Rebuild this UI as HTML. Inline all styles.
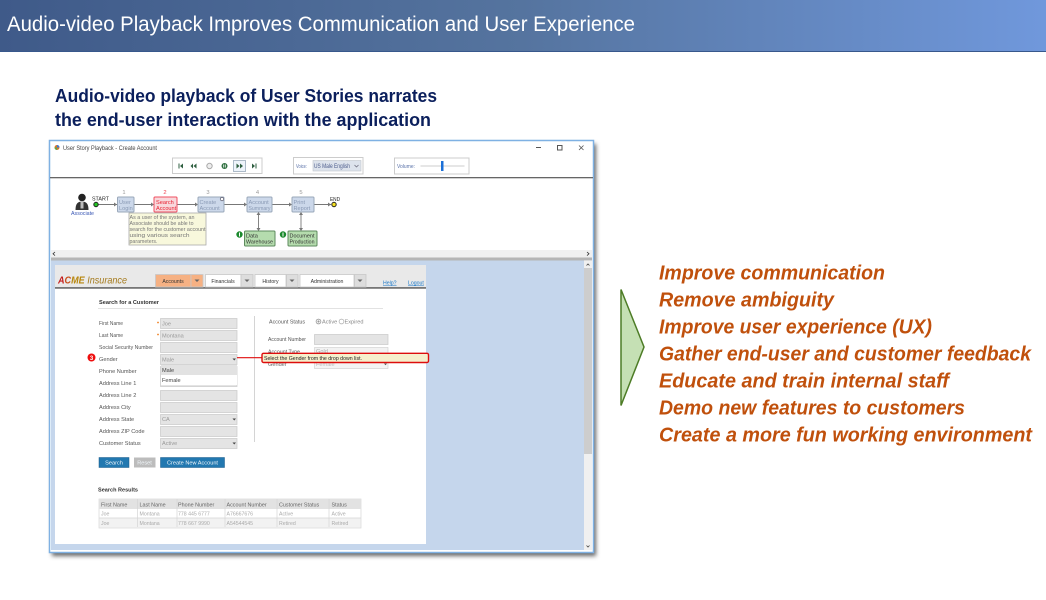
<!DOCTYPE html>
<html><head><meta charset="utf-8"><style>
html,body{margin:0;padding:0;background:#fff;width:1046px;height:600px;overflow:hidden}
svg{display:block;font-family:"Liberation Sans",sans-serif}
.t{font-size:5.6px;fill:#555}
.f{fill:#e4e4e4;stroke:#c8c8c8;stroke-width:.7}
.l{stroke:#777;stroke-width:.9;fill:none}
.b{fill:#ccd8ea;stroke:#9aa8ba;stroke-width:1}
.bt{font-size:5.6px;fill:#8a9ab5}
.g{fill:#b5dcae;stroke:#5d8a5d;stroke-width:1}
.gt{font-size:5.6px;fill:#333}
.c{font-size:5.2px;fill:#aaa}
.h{font-size:5.4px;fill:#666}
</style></head><body>
<svg width="1046" height="600" viewBox="0 0 1046 600" xmlns="http://www.w3.org/2000/svg">
<defs>
<linearGradient id="hd" x1="0" x2="1" y1="0" y2="0"><stop offset="0" stop-color="#3f5a89"/><stop offset=".5" stop-color="#55749f"/><stop offset="1" stop-color="#7098dc"/></linearGradient>
<filter id="sh" x="-5%" y="-5%" width="110%" height="110%"><feGaussianBlur stdDeviation="2"/></filter>
<filter id="bl"><feGaussianBlur stdDeviation=".35"/></filter>
</defs>
<rect width="1046" height="51" fill="url(#hd)"/>
<rect y="51" width="1046" height="1" fill="#38588c"/>
<text x="7" y="31" font-size="21" fill="#fff" textLength="628" lengthAdjust="spacingAndGlyphs">Audio-video Playback Improves Communication and User Experience</text>
<g font-size="18" font-weight="bold" fill="#0b1f5c">
<text x="55" y="102" textLength="382" lengthAdjust="spacingAndGlyphs">Audio-video playback of User Stories narrates</text>
<text x="55" y="126" textLength="376" lengthAdjust="spacingAndGlyphs">the end-user interaction with the application</text>
</g>

<rect x="52" y="144" width="544" height="412" fill="#666" filter="url(#sh)"/>
<g filter="url(#bl)">
<rect x="49.500" y="140.500" width="544" height="412" fill="#fff" stroke="#7fb1e3" stroke-width="1.500"/>
<circle cx="57" cy="147.500" r="2.500" fill="#d8742a"/><path d="M57 147.500V145a2.500 2.500 0 0 1 2.500 2.500z" fill="#3a7bd5"/><path d="M57 147.500H54.500A2.500 2.500 0 0 0 57 150z" fill="#5aa84a"/>
<text x="63" y="150" font-size="6.300" fill="#444" textLength="94" lengthAdjust="spacingAndGlyphs">User Story Playback - Create Account</text>
<path d="M536 147.500h5" stroke="#555" stroke-width="1"/>
<rect x="557.500" y="145.500" width="4.500" height="4.500" fill="none" stroke="#555"/>
<path d="M579 145.500l4.500 4.500m0-4.500l-4.500 4.500" stroke="#555" stroke-width=".8"/>

<rect x="172.500" y="158" width="89.500" height="15.500" fill="#fff" stroke="#ccc" stroke-width="1"/>
<g fill="#2f5f3f">
<path d="M178.500 163.500h1v5h-1zM183 163.500v5l-3-2.500z"/>
<path d="M193 163.500v5l-2.500-2.500zM196.500 163.500v5l-3-2.500z"/>
</g>
<circle cx="209.500" cy="166" r="2.700" fill="#eee" stroke="#aaa"/>
<circle cx="224.500" cy="166" r="3" fill="#2f6f3f"/><path d="M223.700 164.500v3M225.300 164.500v3" stroke="#fff" stroke-width=".8"/>
<rect x="233.500" y="160.500" width="12" height="11" fill="#eef4fb" stroke="#9ab" stroke-width=".8"/>
<path d="M236.500 163.500v5l3-2.500zM240 163.500v5l3-2.500z" fill="#2f5f3f"/>
<path d="M252 163.500v5l3-2.500zM255.500 163.500h1v5h-1z" fill="#2f5f3f"/>

<rect x="293.500" y="157.500" width="69.500" height="16.500" fill="#fff" stroke="#ccc"/>
<text x="296" y="168" font-size="5.500" fill="#5870a8" textLength="11" lengthAdjust="spacingAndGlyphs">Voice:</text>
<rect x="313" y="160.500" width="48" height="10.500" fill="#dde3ec" stroke="#c0c4ca" stroke-width=".6"/>
<text x="314" y="168" font-size="6" fill="#4a5a8a" textLength="36" lengthAdjust="spacingAndGlyphs">US Male English</text>
<path d="M354.500 165l2 2 2-2" stroke="#667" stroke-width=".7" fill="none"/>

<rect x="394.500" y="158" width="74.500" height="16" fill="#fff" stroke="#ccc"/>
<text x="397" y="168" font-size="5.500" fill="#5870a8" textLength="18" lengthAdjust="spacingAndGlyphs">Volume:</text>
<path d="M420.500 166h44" stroke="#ccc" stroke-width="1"/>
<rect x="441" y="161" width="2.500" height="10" fill="#1a6fd8"/>
<rect x="50" y="177" width="543" height="1.300" fill="#666"/>

<!-- process -->
<circle cx="82" cy="197.500" r="3.800" fill="#222"/><path d="M75.500 210c0-6 2-8.500 6.500-8.500s6.500 2.500 6.500 8.500z" fill="#333"/><rect x="80.500" y="201.500" width="3" height="7" fill="#bbb"/>
<text x="71" y="215" font-size="5.800" fill="#3b58b5" textLength="23" lengthAdjust="spacingAndGlyphs">Associate</text>
<text x="92" y="200.500" font-size="5.500" fill="#222" textLength="17" lengthAdjust="spacingAndGlyphs">START</text>
<path class="l" d="M96 204.500H117M134 204.500H154M177 204.500H198M224 204.500H247M272 204.500H292M314 204.500H331"/>
<path fill="#777" d="M117 204.500l-3-2v4zM154 204.500l-3-2v4zM198 204.500l-3-2v4zM247 204.500l-3-2v4zM292 204.500l-3-2v4zM331 204.500l-3-2v4z"/>
<circle cx="96" cy="204.500" r="2.200" fill="#22c422" stroke="#222" stroke-width="1"/>
<circle cx="334" cy="204.500" r="2.200" fill="#f4e020" stroke="#222" stroke-width="1"/>
<text x="330" y="201" font-size="5.200" fill="#222" textLength="10" lengthAdjust="spacingAndGlyphs">END</text>
<g font-size="5.800" fill="#999" text-anchor="middle"><text x="124" y="194">1</text><text x="165" y="194" fill="#f04050">2</text><text x="208" y="194">3</text><text x="257.500" y="194">4</text><text x="301" y="194">5</text></g>
<rect class="b" x="117.500" y="197" width="16.500" height="15" rx="1"/>
<text class="bt" x="119" y="204">User</text><text class="bt" x="119" y="210">Login</text>
<rect x="154" y="197" width="23" height="15" rx="1" fill="#f8d8dc" stroke="#f05060" stroke-width="1"/>
<g font-size="5.600" fill="#e82030"><text x="156" y="204">Search</text><text x="156" y="210">Account</text></g>
<rect class="b" x="198" y="197" width="26" height="15" rx="1"/>
<text class="bt" x="199.500" y="204">Create</text><text class="bt" x="199.500" y="210">Account</text>
<circle cx="222" cy="199" r="1.700" fill="#fff" stroke="#667" stroke-width=".8"/>
<rect class="b" x="247" y="197" width="25" height="15" rx="1"/>
<text class="bt" x="248.500" y="204">Account</text><text class="bt" x="248.500" y="210" textLength="22" lengthAdjust="spacingAndGlyphs">Summary</text>
<rect class="b" x="292" y="197" width="22" height="15" rx="1"/>
<text class="bt" x="293.500" y="204">Print</text><text class="bt" x="293.500" y="210">Report</text>
<rect x="129" y="213" width="77" height="32" fill="#f8f8dc" stroke="#aaa" stroke-width=".8"/>
<g font-size="5.500" fill="#777">
<text x="129.500" y="219" textLength="65" lengthAdjust="spacingAndGlyphs">As a user of the system, an</text>
<text x="129.500" y="225" textLength="64" lengthAdjust="spacingAndGlyphs">Associate should be able to</text>
<text x="129.500" y="231" textLength="76" lengthAdjust="spacingAndGlyphs">search for the customer account</text>
<text x="129.500" y="237" textLength="60" lengthAdjust="spacingAndGlyphs">using various search</text>
<text x="129.500" y="243" textLength="28" lengthAdjust="spacingAndGlyphs">parameters.</text>
</g>
<path class="l" d="M258.500 213V231M301 213V231"/>
<path fill="#777" d="M258.500 212l-2 3h4zM258.500 231l-2-3h4zM301 212l-2 3h4zM301 231l-2-3h4z"/>
<rect class="g" x="244.500" y="231" width="30.500" height="15" rx="1"/>
<text class="gt" x="246" y="237.500">Data</text><text class="gt" x="246" y="243.500" textLength="27" lengthAdjust="spacingAndGlyphs">Warehouse</text>
<rect class="g" x="288" y="231" width="29" height="15" rx="1"/>
<text class="gt" x="289.500" y="237.500" textLength="25" lengthAdjust="spacingAndGlyphs">Document</text><text class="gt" x="289.500" y="243.500" textLength="25" lengthAdjust="spacingAndGlyphs">Production</text>
<circle cx="239.500" cy="234.500" r="3.200" fill="#1f8a2f"/><rect x="239" y="232.500" width="1" height="4" fill="#fff"/>
<circle cx="283" cy="234.500" r="3.200" fill="#1f8a2f"/><rect x="282.500" y="232.500" width="1" height="4" fill="#fff"/>
<rect x="51" y="250" width="541" height="7.500" fill="#f0f0f0"/>
<path d="M55 252l-2 1.800 2 1.800M587 252l2 1.800-2 1.800" stroke="#333" stroke-width=".8" fill="none"/>
<rect x="51" y="257.500" width="541" height="3" fill="#b5b5b5"/>

<!-- content -->
<rect x="51" y="260.500" width="533" height="289.500" fill="#c5d6ec"/>
<rect x="584" y="261" width="8" height="289" fill="#f0f0f0"/>
<rect x="584" y="268" width="8" height="186" fill="#cdcdcd"/>
<path d="M586.500 265.500l1.500-1.500 1.500 1.500M586.500 545.500l1.500 1.500 1.500-1.500" stroke="#444" stroke-width=".8" fill="none"/>
<rect x="55" y="265" width="371" height="279" fill="#fff"/>
<rect x="55" y="265" width="371" height="22" fill="#e9e9e9"/>
<rect x="55" y="287" width="371" height="1.800" fill="#777"/>
<text x="58" y="283.500" font-size="10.500" font-style="italic" fill="#a57a1c" textLength="69" lengthAdjust="spacingAndGlyphs"><tspan font-weight="bold" fill="#c41a1a">A</tspan><tspan font-weight="bold" fill="#c8501a">C</tspan><tspan font-weight="bold" fill="#b8860b">ME</tspan> Insurance</text>
<g stroke="#c8c8c8" stroke-width=".8">
<rect x="155.500" y="274.500" width="35.500" height="12.500" fill="#f6b183"/>
<rect x="191" y="274.500" width="12" height="12.500" fill="#f6b183"/>
<rect x="205.500" y="274.500" width="35.500" height="12.500" fill="#fff"/>
<rect x="241" y="274.500" width="12" height="12.500" fill="#ddd"/>
<rect x="255" y="274.500" width="31" height="12.500" fill="#fff"/>
<rect x="286.500" y="274.500" width="11.500" height="12.500" fill="#ddd"/>
<rect x="300" y="274.500" width="54" height="12.500" fill="#fff"/>
<rect x="354.500" y="274.500" width="11.500" height="12.500" fill="#ddd"/>
</g>
<path d="M194.500 279.500h5l-2.500 2.500zM244.500 279.500h5l-2.500 2.500zM289.500 279.500h5l-2.500 2.500zM357.500 279.500h5l-2.500 2.500z" fill="#666"/>
<g font-size="5.200" fill="#333" text-anchor="middle"><text x="173" y="283">Accounts</text><text x="223" y="283">Financials</text><text x="270.500" y="283">History</text><text x="327" y="283">Administration</text></g>
<g font-size="5.200" fill="#1a78c8" text-decoration="underline"><text x="383" y="284.500">Help?</text><text x="408" y="284.500">Logout</text></g>
<text x="99" y="304" font-size="5.800" font-weight="bold" fill="#333" textLength="60" lengthAdjust="spacingAndGlyphs">Search for a Customer</text>
<rect x="98" y="308" width="285" height="1" fill="#e2e2e2"/>
<rect x="254" y="316" width="1" height="126" fill="#d4d4d4"/>
<g>
<text class="t" x="99" y="325" textLength="24" lengthAdjust="spacingAndGlyphs">First Name</text>
<text class="t" x="99" y="337" textLength="24" lengthAdjust="spacingAndGlyphs">Last Name</text>
<text class="t" x="99" y="349" textLength="54" lengthAdjust="spacingAndGlyphs">Social Security Number</text>
<text class="t" x="99" y="361">Gender</text>
<text class="t" x="99" y="373">Phone Number</text>
<text class="t" x="99" y="385">Address Line 1</text>
<text class="t" x="99" y="397">Address Line 2</text>
<text class="t" x="99" y="409">Address City</text>
<text class="t" x="99" y="421">Address State</text>
<text class="t" x="99" y="433">Address ZIP Code</text>
<text class="t" x="99" y="445">Customer Status</text>
</g>
<circle cx="158" cy="322.500" r=".9" fill="#f08020"/><circle cx="158" cy="334.500" r=".9" fill="#f08020"/>
<rect class="f" x="160.500" y="318.500" width="76.500" height="10"/>
<rect class="f" x="160.500" y="330.500" width="76.500" height="10"/>
<rect class="f" x="160.500" y="342.500" width="76.500" height="10"/>
<rect class="f" x="160.500" y="354.500" width="76.500" height="10"/>
<rect class="f" x="160.500" y="366.500" width="76.500" height="20"/>
<rect class="f" x="160.500" y="390.500" width="76.500" height="10"/>
<rect class="f" x="160.500" y="402.500" width="76.500" height="10"/>
<rect class="f" x="160.500" y="414.500" width="76.500" height="10"/>
<rect class="f" x="160.500" y="426.500" width="76.500" height="10"/>
<rect class="f" x="160.500" y="438.500" width="76.500" height="10"/>
<g>
<text class="t" x="162" y="325.500" style="fill:#999">Joe</text>
<text class="t" x="162" y="337.500" style="fill:#999">Montana</text>
<text class="t" x="162" y="361.500" style="fill:#999">Male</text>
<text class="t" x="162" y="421" style="fill:#999">CA</text>
<text class="t" x="162" y="445" style="fill:#999">Active</text>
</g>
<path d="M232.500 358.500h3.500l-1.750 2zM232.500 418.500h3.500l-1.750 2zM232.500 442.500h3.500l-1.750 2z" fill="#444"/>
<rect x="161" y="365" width="76" height="10" fill="#e2e2e2"/>
<rect x="161" y="375" width="76" height="10" fill="#fff"/>
<text x="162" y="372" font-size="5.600" fill="#444">Male</text><text x="162" y="382" font-size="5.600" fill="#444">Female</text>
<circle cx="91.500" cy="357.500" r="4" fill="#ee1111"/><text x="91.500" y="359.800" font-size="6" font-weight="bold" fill="#fff" text-anchor="middle">3</text>
<text class="t" x="269" y="323.500" textLength="36" lengthAdjust="spacingAndGlyphs">Account Status</text>
<circle cx="318.500" cy="321.500" r="2.400" fill="#fff" stroke="#888" stroke-width=".7"/><circle cx="318.500" cy="321.500" r="1.100" fill="#999"/>
<text class="t" x="322" y="323.500" style="fill:#888">Active</text>
<circle cx="341.500" cy="321.500" r="2.400" fill="#fff" stroke="#aaa" stroke-width=".7"/>
<text class="t" x="344.500" y="323.500" style="fill:#888">Expired</text>
<text class="t" x="268" y="341" textLength="38" lengthAdjust="spacingAndGlyphs">Account Number</text>
<rect class="f" x="314.500" y="334.500" width="73.500" height="10"/>
<text class="t" x="268" y="353.500" textLength="32" lengthAdjust="spacingAndGlyphs">Account Type</text>
<rect x="314.500" y="347.500" width="73.500" height="9" fill="#f2f2f2" stroke="#ccc" stroke-width=".6"/>
<text class="t" x="316" y="353" style="fill:#aaa">Gold</text>
<text class="t" x="268" y="366" style="fill:#666">Gender</text>
<rect x="314.500" y="359.500" width="73.500" height="9" fill="#f4f4f4" stroke="#ccc" stroke-width=".6"/>
<text class="t" x="316" y="366" style="fill:#bbb">Female</text>
<path d="M384 363.500h3l-1.500 1.700z" fill="#555"/>
<path d="M237 357.700H262" stroke="#e01010" stroke-width="1.100"/>
<rect x="262" y="353.300" width="166.500" height="9.200" rx="1.500" fill="#f6efcc" stroke="#dd1111" stroke-width="1.400"/>
<text x="264" y="359.800" font-size="5.700" fill="#222" textLength="98" lengthAdjust="spacingAndGlyphs">Select the Gender from the drop down list.</text>
<rect x="99" y="457.500" width="30" height="10" fill="#2278b0" stroke="#185a88" stroke-width=".5"/>
<rect x="134" y="457.500" width="21.500" height="10" fill="#bcbcbc"/>
<rect x="160.500" y="457.500" width="64" height="10" fill="#2278b0" stroke="#185a88" stroke-width=".5"/>
<g font-size="5.600" fill="#f0f6fa" text-anchor="middle"><text x="114" y="464.500">Search</text><text x="144.500" y="464.500">Reset</text><text x="192.500" y="464.500">Create New Account</text></g>
<text x="98" y="491.500" font-size="5.600" font-weight="bold" fill="#333" textLength="40" lengthAdjust="spacingAndGlyphs">Search Results</text>
<rect x="99" y="499" width="262" height="29" fill="#f2f2f2" stroke="#ddd" stroke-width=".8"/>
<rect x="99" y="499" width="262" height="10" fill="#e2e2e2"/>
<rect x="99.500" y="509" width="261" height="9" fill="#fff"/>
<path d="M137.500 499v28M177 499v28M225 499v28M277 499v28M329 499v28M99 518h262" stroke="#d5d5d5" stroke-width=".7"/>
<g>
<text class="h" x="101" y="506.500">First Name</text><text class="h" x="139.500" y="506.500">Last Name</text><text class="h" x="178" y="506.500">Phone Number</text><text class="h" x="226.500" y="506.500">Account Number</text><text class="h" x="279" y="506.500">Customer Status</text><text class="h" x="331.500" y="506.500">Status</text>
</g>
<text class="c" x="101" y="515.500">Joe</text><text class="c" x="139.500" y="515.500">Montana</text><text class="c" x="178" y="515.500">778 445 6777</text><text class="c" x="226.500" y="515.500">A76667676</text><text class="c" x="279" y="515.500">Active</text><text class="c" x="331.500" y="515.500">Active</text>
<text class="c" x="101" y="525">Joe</text><text class="c" x="139.500" y="525">Montana</text><text class="c" x="178" y="525">778 667 9990</text><text class="c" x="226.500" y="525">A54544545</text><text class="c" x="279" y="525">Retired</text><text class="c" x="331.500" y="525">Retired</text>
</g>

<polygon points="621,289.500 644,347 621,405.500" fill="#c5e0b4" stroke="#4d7c26" stroke-width="1.500"/>

<g font-size="20" font-weight="bold" font-style="italic" fill="#c0500c">
<text x="659" y="279.500" textLength="226" lengthAdjust="spacingAndGlyphs">Improve communication</text>
<text x="659" y="306.500" textLength="175" lengthAdjust="spacingAndGlyphs">Remove ambiguity</text>
<text x="659" y="333.500" textLength="273" lengthAdjust="spacingAndGlyphs">Improve user experience (UX)</text>
<text x="659" y="360.500" textLength="372" lengthAdjust="spacingAndGlyphs">Gather end-user and customer feedback</text>
<text x="659" y="387.500" textLength="290" lengthAdjust="spacingAndGlyphs">Educate and train internal staff</text>
<text x="659" y="414.500" textLength="306" lengthAdjust="spacingAndGlyphs">Demo new features to customers</text>
<text x="659" y="441.500" textLength="373" lengthAdjust="spacingAndGlyphs">Create a more fun working environment</text>
</g>
</svg>
</body></html>
